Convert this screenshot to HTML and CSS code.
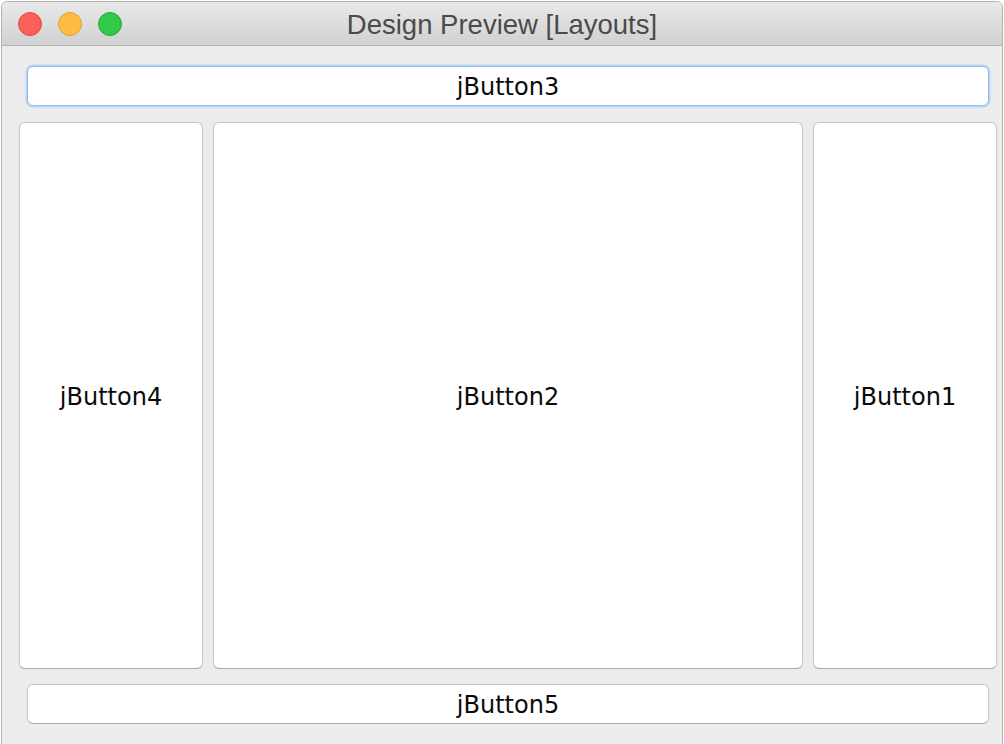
FILE: index.html
```html
<!DOCTYPE html>
<html lang="en">
<head>
    <meta charset="UTF-8">
    <title>Design Preview [Layouts]</title>
    <link rel="stylesheet" href="styles.css">
</head>
<body>
    <div class="window">
        <div class="title-bar">
            <div class="traffic-lights">
                <span class="light close"></span>
                <span class="light minimize"></span>
                <span class="light zoom"></span>
            </div>
            <div class="title">Design Preview [Layouts]</div>
        </div>
        <div class="content">
            <button class="jbutton north focused">jButton3</button>
            <div class="center-row">
                <button class="jbutton">jButton4</button>
                <button class="jbutton">jButton2</button>
                <button class="jbutton">jButton1</button>
            </div>
            <button class="jbutton south">jButton5</button>
        </div>
    </div>
</body>
</html>
```

FILE: styles.css
```css
:root {
    --window-bg: #ececec;
    --button-border: #c6c6c6;
    --button-border-bottom: #aaaaaa;
    --focus-color: #92bbea;
    --text-color: #0a0a0a;
}

* {
    box-sizing: border-box;
}

body {
    margin: 0;
    padding: 0;
    background-color: #ffffff;
    width: 1004px;
    height: 744px;
    overflow: hidden;
}

.window {
    margin: 1px 0 0 1px;
    width: 1002px;
    height: 750px;
    border: 1px solid #b4b4b4;
    border-radius: 6px 6px 0 0;
    background-color: var(--window-bg);
    overflow: hidden;
    display: flex;
    flex-direction: column;
}

.title-bar {
    height: 44px;
    flex: 0 0 44px;
    background: linear-gradient(#e9e9e9, #d1d1d1);
    border-bottom: 1px solid #b3b3b3;
    display: flex;
    align-items: center;
    position: relative;
}

.traffic-lights {
    display: flex;
    gap: 16px;
    padding-left: 16px;
    padding-top: 1px;
}

.light {
    width: 24px;
    height: 24px;
    border-radius: 50%;
    display: block;
}

.close {
    background-color: #fc605c;
    border: 1px solid #df4a46;
}

.minimize {
    background-color: #fdbc40;
    border: 1px solid #dea133;
}

.zoom {
    background-color: #34c84a;
    border: 1px solid #27a83a;
}

.title {
    position: absolute;
    left: 0;
    right: 0;
    top: 0;
    bottom: 0;
    display: flex;
    align-items: center;
    justify-content: center;
    font-family: "Liberation Sans", Arial, sans-serif;
    font-size: 27.5px;
    color: #4b4b4b;
    padding-top: 3px;
}

.content {
    flex: 1;
    display: flex;
    flex-direction: column;
    padding-top: 20px;
}

.jbutton {
    font-family: "DejaVu Sans", Verdana, sans-serif;
    font-size: 24px;
    color: var(--text-color);
    background-color: #ffffff;
    border: 1px solid var(--button-border);
    border-bottom-color: var(--button-border-bottom);
    border-radius: 6px;
    padding: 2px 0 0 0;
    margin: 0;
    display: flex;
    align-items: center;
    justify-content: center;
}

.north,
.south {
    height: 40px;
    margin-left: 25px;
    width: 962px;
}

.south {
    margin-top: 15px;
}

.focused {
    border: 1px solid var(--focus-color);
    box-shadow: 0 0 0 1.5px #b9d4f4;
}

.center-row {
    margin-top: 16px;
    margin-left: 17px;
    width: 978px;
    height: 547px;
    display: grid;
    grid-template-columns: 184px 1fr 184px;
    column-gap: 10px;
}
```
